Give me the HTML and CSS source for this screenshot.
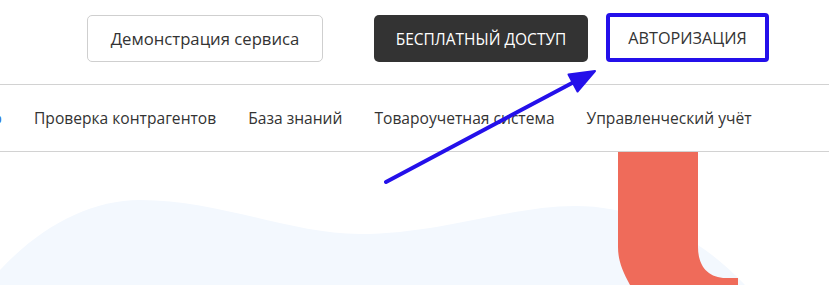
FILE: index.html
```html
<!DOCTYPE html>
<html lang="ru">
<head>
<meta charset="utf-8">
<title>Сервис</title>
<link rel="stylesheet" href="styles.css">
</head>
<body>
<div class="page">
  <header class="topbar">
    <a class="btn btn-outline" href="#">Демонстрация сервиса</a>
    <a class="btn btn-dark" href="#">БЕСПЛАТНЫЙ ДОСТУП</a>
    <a class="btn btn-auth" href="#">АВТОРИЗАЦИЯ</a>
  </header>
  <nav class="menu">
    <a class="menu-item menu-item-active" href="#">Бухгалтерия и ЭДО онлайн и кадровое дело</a>
    <a class="menu-item" href="#">Проверка контрагентов</a>
    <a class="menu-item" href="#">База знаний</a>
    <a class="menu-item" href="#">Товароучетная система</a>
    <a class="menu-item" href="#">Управленческий учёт</a>
  </nav>
  <section class="hero">
    <svg class="hero-art" width="829" height="133" viewBox="0 0 829 133">
      <path d="M0,118 C40,75 90,48 140,48 C220,48 290,82 360,82 C440,82 510,54 575,54 C640,54 700,85 745,133 L0,133 Z" fill="#f3f8fe"/>
      <path d="M618,0 H698 V95 C698,114 708,126 726,126 H738 V133 H630 C622,118 618,108 618,95 Z" fill="#ef6b5a"/>
    </svg>
  </section>
  <svg class="pointer" width="829" height="285" viewBox="0 0 829 285">
    <line x1="386" y1="182" x2="574" y2="82" stroke="#2410ea" stroke-width="4" stroke-linecap="round"/>
    <polygon points="595,71 568.5,74.5 577.5,91.5" fill="#2410ea" stroke="#2410ea" stroke-width="2" stroke-linejoin="round"/>
  </svg>
</div>
</body>
</html>
```
FILE: styles.css
```css
html, body {
  margin: 0;
  padding: 0;
  background: #ffffff;
}
body {
  font-family: "Open Sans", "Liberation Sans", sans-serif;
  color: #333333;
  overflow: hidden;
}
.page {
  position: relative;
  width: 829px;
  height: 285px;
  overflow: hidden;
}
.topbar {
  display: flex;
  justify-content: flex-end;
  align-items: flex-end;
  height: 62px;
  padding: 0 60px 0 0;
  margin-bottom: 22px;
}
.btn {
  display: flex;
  align-items: center;
  justify-content: center;
  box-sizing: border-box;
  text-decoration: none;
  height: 47px;
  border-radius: 5px;
  white-space: nowrap;
}
.btn-outline {
  width: 236px;
  border: 1px solid #cfcfcf;
  color: #333333;
  font-size: 16.7px;
  margin-right: 51px;
}
.btn-dark {
  width: 214px;
  background: #333333;
  color: #ffffff;
  font-size: 15.5px;
  margin-right: 18px;
}
.btn-auth {
  width: 163px;
  height: 49px;
  border: 4px solid #2410ea;
  border-radius: 4px;
  color: #333333;
  font-size: 16.2px;
}
.menu {
  display: flex;
  align-items: center;
  gap: 32px;
  height: 66px;
  border-top: 1px solid #d2d2d2;
  border-bottom: 1px solid #d2d2d2;
  white-space: nowrap;
}
.menu-item {
  color: #333333;
  text-decoration: none;
  font-size: 15.6px;
}
.menu-item-active {
  flex: 0 0 400px;
  margin-left: -398px;
  text-align: right;
  color: #2f6fd6;
}
.hero {
  height: 133px;
}
.hero-art {
  display: block;
}
.pointer {
  position: absolute;
  left: 0;
  top: 0;
  pointer-events: none;
}
```
